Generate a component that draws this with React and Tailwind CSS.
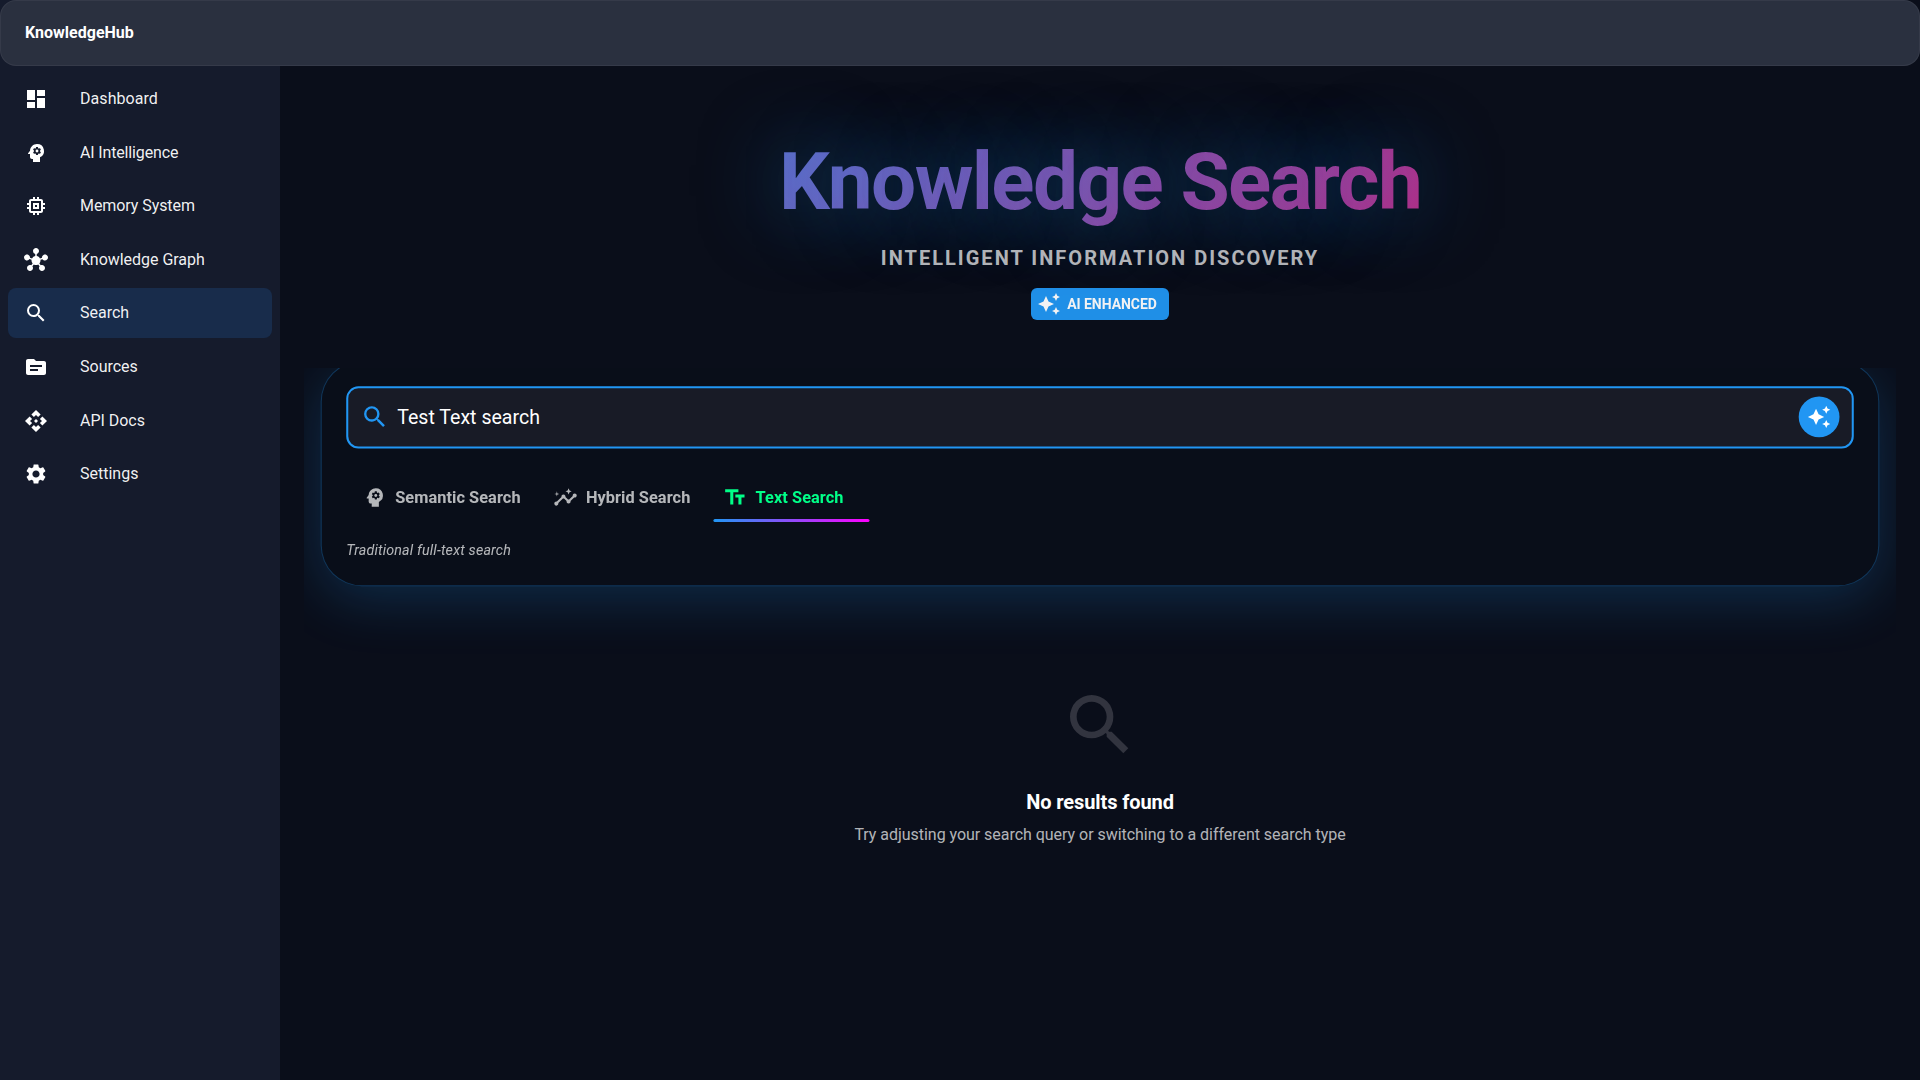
import { MdDashboard, MdPsychology, MdMemory, MdHub, MdSearch, MdSource, MdApi, MdSettings, MdAutoAwesome, MdInsights, MdTextFields } from "react-icons/md";

const nav = [
  [MdDashboard, "Dashboard", "tracking-[0.06px]"],
  [MdPsychology, "AI Intelligence", "tracking-[-0.15px]"],
  [MdMemory, "Memory System", "tracking-[-0.07px]"],
  [MdHub, "Knowledge Graph", "tracking-[-0.03px]"],
  [MdSearch, "Search", ""],
  [MdSource, "Sources", ""],
  [MdApi, "API Docs", "tracking-[-0.03px]"],
  [MdSettings, "Settings", ""],
];

const tabs = [
  [MdPsychology, "Semantic Search"],
  [MdInsights, "Hybrid Search"],
  [MdTextFields, "Text Search"],
];

function Header() {
  return (
    <header className="relative z-10 h-[66px] shrink-0 rounded-2xl border border-white/5 bg-[#2a303f] px-6 pt-[19px]">
      <h1 className="text-base leading-[26px] font-bold text-white">KnowledgeHub</h1>
    </header>
  );
}

function Sidebar() {
  return (
    <aside className="-mt-[66px] w-[280px] shrink-0 bg-[#151b2c] pt-[66px]">
      <nav className="flex flex-col gap-[3.6px] px-2 pt-2">
        {nav.map(([Icon, label, tracking]) => (
          <a key={label} className={"flex h-[50px] items-center rounded-lg pl-4 text-white " + (label === "Search" ? "bg-[#182c4b]" : "")}>
            <Icon className="size-6" />
            <span className={"ml-8 text-base text-white/95 " + tracking}>{label}</span>
          </a>
        ))}
      </nav>
    </aside>
  );
}

function Hero() {
  return (
    <section className="mx-6 flex h-[302px] flex-col items-center pt-[68px]">
      <h2 className="w-full bg-[linear-gradient(135deg,#2196f3_0%,#f50057_100%)] bg-clip-text text-center text-[80px] leading-[96px] font-bold tracking-[-1.6px] text-transparent [text-shadow:0_0_80px_rgba(33,150,243,0.5)]">Knowledge Search</h2>
      <p className="mt-[12px] text-xl leading-8 font-bold tracking-[2.02px] text-white/70 uppercase">Intelligent Information Discovery</p>
      <span className="mt-[14px] flex h-8 items-center rounded-md bg-[#2196f3] pr-3 pl-[6px] text-sm font-bold tracking-[-0.06px] text-white opacity-95">
        <MdAutoAwesome className="mr-1.5 size-6" />AI ENHANCED
      </span>
    </section>
  );
}

function SearchPanel() {
  return (
    <section className="mx-6 h-[289px] overflow-hidden px-8">
      <div className="-mt-[5px] h-[221px] scale-[1.02] rounded-[40px] border border-[#2196f3]/30 bg-[#090e19] p-6 shadow-[0_12px_54px_rgba(33,150,243,0.22)]">
        <div className="flex h-[61px] items-center rounded-xl border-2 border-[#2196f3] bg-[#181b26] px-3">
          <MdSearch className="-mt-0.5 size-7 text-[#2196f3]" />
          <span className="mt-0.5 ml-2 flex-1 text-[19.2px] text-white">Test Text search</span>
          <span className="-mt-px flex size-10 items-center justify-center rounded-full bg-[#2196f3] text-white"><MdAutoAwesome className="size-6" /></span>
        </div>
        <div className="mt-6 flex">
          {tabs.map(([Icon, label]) => (
            <div key={label} className={"relative flex h-12 items-center gap-2 px-4 text-base font-bold tracking-[0.07px] " + (label === "Text Search" ? "text-[#00ff88]" : "text-white/70")}>
              <Icon className="size-6" />{label}
              {label === "Text Search" && <span className="absolute bottom-0 left-[7px] h-[3px] w-[153px] rounded-sm bg-[linear-gradient(90deg,#2196f3,#ff00ff)]" />}
            </div>
          ))}
        </div>
        <p className="mt-[17px] text-sm leading-5 tracking-[0.17px] text-white/70 italic">Traditional full-text search</p>
      </div>
    </section>
  );
}

function EmptyState() {
  return (
    <section className="flex flex-col items-center pt-7">
      <MdSearch className="size-20 text-[#32343f]" />
      <h3 className="mt-[21px] text-xl leading-8 font-bold tracking-[-0.1px] text-white">No results found</h3>
      <p className="mt-[5px] text-base leading-6 tracking-[-0.035px] text-white/70">Try adjusting your search query or switching to a different search type</p>
    </section>
  );
}

export default function App() {
  return (
    <div className="flex h-screen flex-col overflow-hidden bg-[#0a0e1a] font-[Roboto,sans-serif]">
      <Header />
      <div className="flex min-h-0 flex-1">
        <Sidebar />
        <main className="min-w-0 flex-1">
          <Hero />
          <SearchPanel />
          <EmptyState />
        </main>
      </div>
    </div>
  );
}
